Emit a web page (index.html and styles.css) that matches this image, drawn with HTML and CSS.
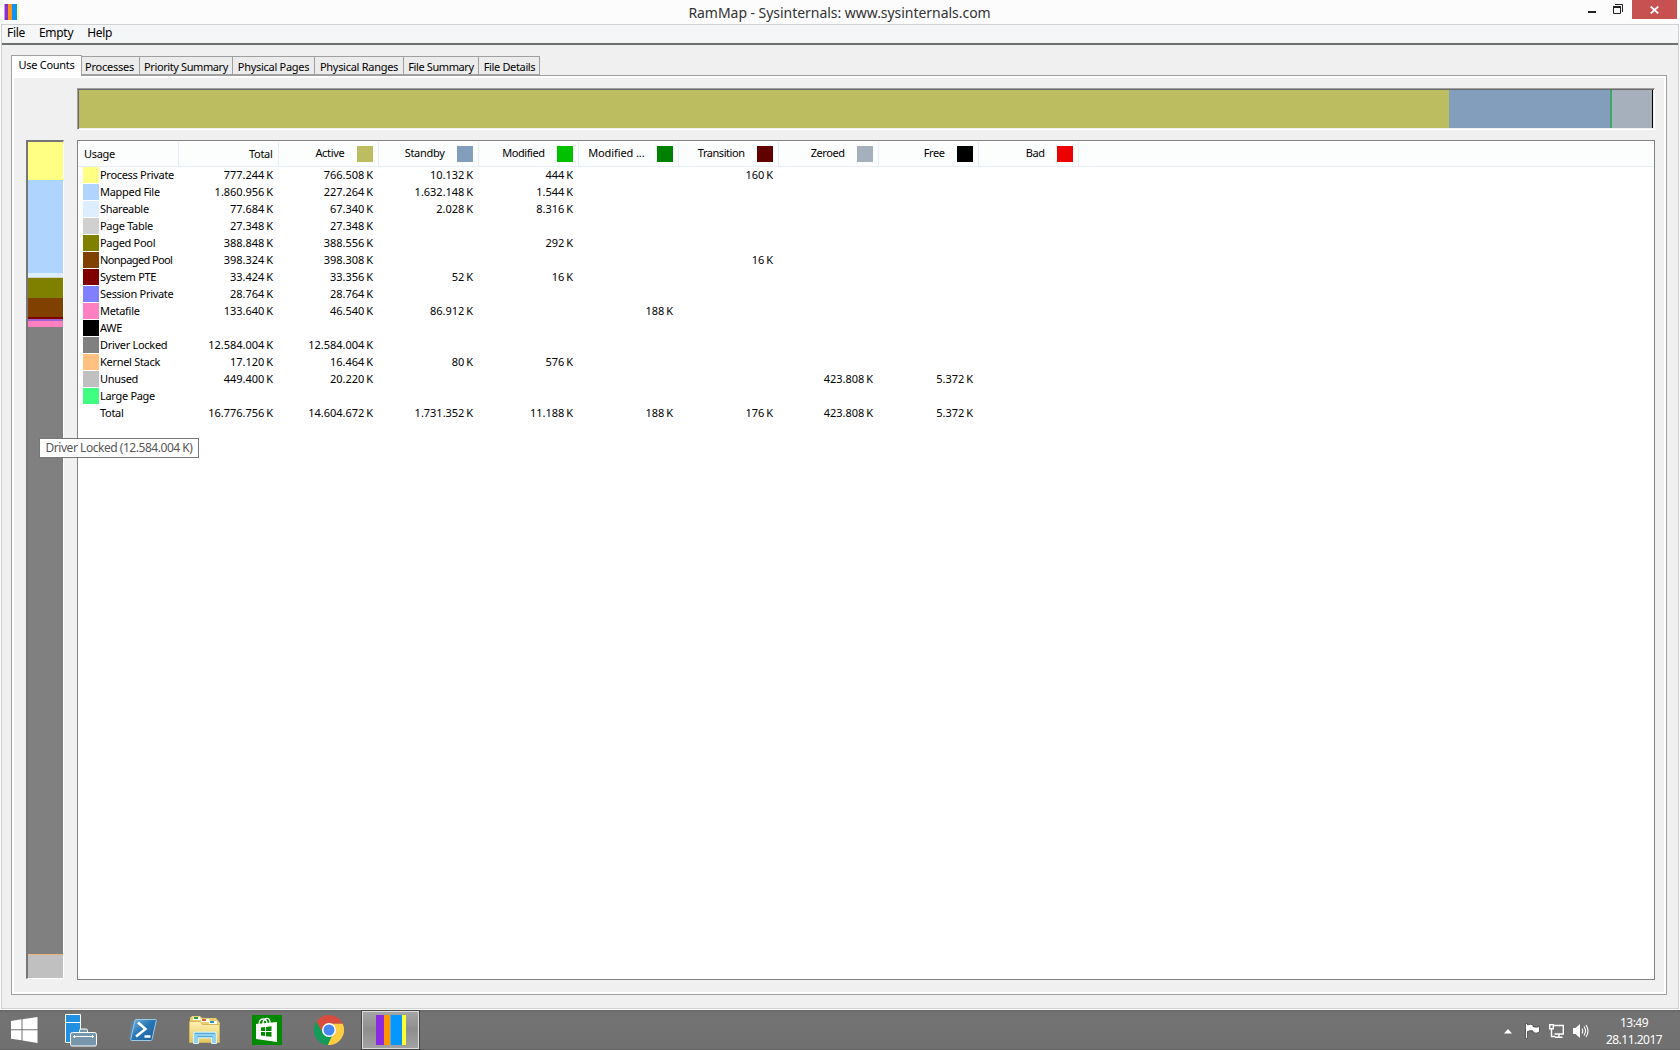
FILE: index.html
```html
<!DOCTYPE html>
<html lang="en">
<head>
<meta charset="utf-8">
<title>RamMap - Sysinternals: www.sysinternals.com</title>
<link rel="stylesheet" href="styles.css">
</head>
<body>
<header class="titlebar">
  <svg class="app-icon" width="15" height="16" viewBox="0 0 15 16"><path fill="#c79ae6" d="M0 0h1v16H0z"/><path fill="#8433cf" d="M1 0h3v16H1z"/><path fill="#ff9318" d="M4 0h4v16H4z"/><path fill="#0c95f5" d="M8 0h5v16H8z"/><path fill="#fbf99a" d="M13 0h2v16h-2z"/></svg>
  <h1 class="title">RamMap - Sysinternals: www.sysinternals.com</h1>
  <div class="controls">
    <svg width="8" height="20" viewBox="0 0 8 20"><path fill="#222" d="M0 11h8v2H0z"/></svg>
    <svg width="10" height="20" viewBox="0 0 10 20"><path fill="none" stroke="#222" d="M2 4.500h7.500V12M.5 8v5.500h7V7"/><path fill="#222" d="M0 6h8v2H0z"/></svg>
    <span class="close"><svg width="9" height="8" viewBox="0 0 9 8"><path stroke="#fff" stroke-width="1.700" d="M.7.500l7.600 7M8.300.500L.7 7.500"/></svg></span>
  </div>
</header>
<main class="window">
  <nav class="menu"><span>File</span><span>Empty</span><span>Help</span></nav>
  <div class="client">
    <div class="tabs">
      <span class="tab selected">Use Counts</span><span class="tab t2">Processes</span><span class="tab t3">Priority Summary</span><span class="tab t4">Physical Pages</span><span class="tab t5">Physical Ranges</span><span class="tab t6">File Summary</span><span class="tab t7">File Details</span>
    </div>
    <section class="page">
      <div class="usage-bar">
        <i style="height:38px;background:#ffff84"></i><i style="height:93px;background:#afd5ff"></i><i style="height:4px;background:#dceeff"></i><i style="height:1px;background:#d0d0d0"></i><i style="height:20px;background:#808000"></i><i style="height:19px;background:#804000"></i><i style="height:2px;background:#800000"></i><i style="height:2px;background:#a064d0"></i><i style="height:6px;background:#ff80c0"></i><i style="height:627px;background:#808080"></i><i style="height:1px;background:#eeb47e"></i><i style="height:23px;background:#c0c0c0"></i>
      </div>
      <div class="content">
        <div class="list-bar">
          <i style="width:1370px;background:#bcbc60"></i><i style="width:161px;background:#839dbc"></i><i style="width:2px;background:#3fa763"></i><i style="width:40px;background:#a5b0bc"></i><i style="width:1px;background:#000"></i>
        </div>
        <div class="list">
          <table>
            <thead><tr><th>Usage</th><th>Total</th><th>Active<b style="background:#bcbc60"></b></th><th>Standby<b style="background:#839dbc"></b></th><th>Modified<b style="background:#00c000"></b></th><th class="wide">Modified ...<b style="background:#008000"></b></th><th>Transition<b style="background:#600000"></b></th><th>Zeroed<b style="background:#a5b0bc"></b></th><th>Free<b style="background:#000"></b></th><th>Bad<b style="background:#ec0000"></b></th><th></th></tr></thead>
            <tbody>
              <tr><td><b style="background:#ffff84"></b>Process Private</td><td>777.244 K</td><td>766.508 K</td><td>10.132 K</td><td>444 K</td><td></td><td>160 K</td></tr>
              <tr><td><b style="background:#afd5ff"></b>Mapped File</td><td>1.860.956 K</td><td>227.264 K</td><td>1.632.148 K</td><td>1.544 K</td></tr>
              <tr><td><b style="background:#dceeff"></b>Shareable</td><td>77.684 K</td><td>67.340 K</td><td>2.028 K</td><td>8.316 K</td></tr>
              <tr><td><b style="background:#d0d0d0"></b>Page Table</td><td>27.348 K</td><td>27.348 K</td></tr>
              <tr><td><b style="background:#808000"></b>Paged Pool</td><td>388.848 K</td><td>388.556 K</td><td></td><td>292 K</td></tr>
              <tr><td><b style="background:#804000"></b><span class="tight">Nonpaged Pool</span></td><td>398.324 K</td><td>398.308 K</td><td></td><td></td><td></td><td>16 K</td></tr>
              <tr><td><b style="background:#800000"></b>System PTE</td><td>33.424 K</td><td>33.356 K</td><td>52 K</td><td>16 K</td></tr>
              <tr><td><b style="background:#8080ff"></b>Session Private</td><td>28.764 K</td><td>28.764 K</td></tr>
              <tr><td><b style="background:#ff80c0"></b>Metafile</td><td>133.640 K</td><td>46.540 K</td><td>86.912 K</td><td></td><td>188 K</td></tr>
              <tr><td><b style="background:#000"></b>AWE</td></tr>
              <tr><td><b style="background:#808080"></b>Driver Locked</td><td>12.584.004 K</td><td>12.584.004 K</td></tr>
              <tr><td><b style="background:#ffc080"></b>Kernel Stack</td><td>17.120 K</td><td>16.464 K</td><td>80 K</td><td>576 K</td></tr>
              <tr><td><b style="background:#c0c0c0"></b>Unused</td><td>449.400 K</td><td>20.220 K</td><td></td><td></td><td></td><td></td><td>423.808 K</td><td>5.372 K</td></tr>
              <tr><td><b style="background:#40ff80"></b>Large Page</td></tr>
              <tr><td><b></b>Total</td><td>16.776.756 K</td><td>14.604.672 K</td><td>1.731.352 K</td><td>11.188 K</td><td>188 K</td><td>176 K</td><td>423.808 K</td><td>5.372 K</td></tr>
            </tbody>
          </table>
        </div>
      </div>
    </section>
  </div>
</main>
<div class="tooltip">Driver Locked (12.584.004 K)</div>
<footer class="taskbar">
  <div class="apps">
    <span class="app"><svg width="28" height="28" viewBox="0 0 28 28"><path fill="#fff" d="M1 5l10.500-1.700v10H1zM12.500 3.200L27.500 1v12.300h-15zM1 14.300h10.500v10L1 22.700zM12.500 14.300h15V27l-15-2.400z"/></svg></span>
    <span class="app"><svg width="34" height="34" viewBox="0 0 34 34"><path fill="#2290e0" stroke="#fff" d="M1.500 1.500h15v28h-15zM1.500 9.500h15"/><path fill="#7795ab" stroke="#fff" d="M15.500 19.500v-2q0-1.500 1.500-1.500h5q1.500 0 1.500 1.500v2M8.500 19.500h22q2 0 2 2v10q0 1.500-1.500 1.500H8q-1.500 0-1.500-1.500v-10q0-2 2-2z"/><path fill="none" stroke="#fff" d="M9 23.500h21M10.500 22v3M28.500 22v3"/></svg></span>
    <span class="app"><svg width="30" height="26" viewBox="0 0 30 26"><defs><linearGradient id="ps" x2="1" y2="1"><stop stop-color="#7fb9de"/><stop offset=".45" stop-color="#2878b6"/><stop offset="1" stop-color="#1b5a9d"/></linearGradient></defs><path fill="#5f8097" d="M3 4h4L4 22H1z"/><path fill="url(#ps)" stroke="#9bcbe6" d="M8 2.500h19.500q1 0 .8 1L24 22.500q-.2 1-1.200 1H3.500q-1 0-.8-1L6.900 3.500q.2-1 1.100-1z"/><path fill="none" stroke="#fff" stroke-width="2.500" d="M10 5.500l7.500 6.500L8 19.500M16.500 19.500h6"/></svg></span>
    <span class="app"><svg width="32" height="32" viewBox="0 0 32 32"><defs><linearGradient id="fo" x2="0" y2="1"><stop stop-color="#fdf2b2"/><stop offset="1" stop-color="#e7c65b"/></linearGradient></defs><path fill="#e9cf70" d="M1 4l2-2h8l2 2h14l4 5v19H1z"/><path fill="#fff" d="M4 3h7l1 3H4zM12 5h8l1 3h-9zM20 7h8v3h-8z"/><path fill="#21a038" d="M5 3h4v2H5z"/><path fill="#d95a31" d="M13 5h4v2h-4z"/><path fill="#318fc8" d="M21 7h4v2h-4z"/><path fill="url(#fo)" stroke="#d5b559" d="M.5 7.500h11l2 3h17v18H.5z"/><path fill="#93d2ef" stroke="#d5f2fb" d="M4.500 29.500V20q0-2 2-2h19q2 0 2 2v9.500h-5V24H9.500v5.500z"/><path fill="none" stroke="#55a8d4" d="M6 19.500h20M8.500 22.500h15"/></svg></span>
    <span class="app"><svg width="30" height="30" viewBox="0 0 30 30"><path fill="#008a00" d="M0 0h30v30H0z"/><path fill="#fff" d="M4 9l21-2v20L4 24z"/><path fill="none" stroke="#fff" stroke-width="1.300" d="M7 10q0-6 4-6t4 5M11 9q0-5 3.500-5.500T18 8"/><path fill="#008a00" d="M9 12.500l4-.5v4H9zM14 12l5.500-.7V16H14zM9 17h4v4l-4-.5zM14 17h5.500v4.800L14 21.200z"/></svg></span>
    <span class="app"><svg width="30" height="30" viewBox="0 0 30 30"><path fill="#139b59" d="M15 15L2 7.500A15 15 0 0 0 14 30z"/><path fill="#ffcd41" d="M15 15l-1.200 15A15 15 0 0 0 28.500 8.500H15z"/><path fill="#d94b3d" d="M15 15L8.500 17.500 2.500 6.700A15 15 0 0 1 28.500 8.500H15z"/><path fill="#139b59" d="M2.500 6.700l6.300 11.500L15 21.800 18 21l-4.200 9A15 15 0 0 1 2.500 6.700z"/><circle cx="15" cy="15" r="7" fill="#fff"/><circle cx="15" cy="15" r="5.500" fill="#4688f1"/></svg></span>
    <span class="app active"><svg width="30" height="30" viewBox="0 0 30 30"><path fill="#8a2be2" d="M0 0h8v30H0z"/><path fill="#ff9800" d="M8 0h6v30H8z"/><path fill="#6da6c6" d="M14 0h1v30h-1z"/><path fill="#0498ff" d="M15 0h11v30H15z"/><path fill="#ffff35" d="M26 0h4v30h-4z"/></svg></span>
  </div>
  <div class="tray">
    <svg width="8" height="5" viewBox="0 0 8 5"><path fill="#fff" d="M4 0l4 4.500H0z"/></svg>
    <svg width="17" height="18" viewBox="0 0 17 18"><path fill="#fff" stroke="#444" stroke-width=".8" d="M1.500 1.500h2V3Q7 1.500 9 3v1.500q3 1.500 6.500 0V10q-3 2-6.500.5V9Q7 8 3.500 9.500v7h-2z"/></svg>
    <svg width="17" height="16" viewBox="0 0 17 16"><path fill="none" stroke="#fff" stroke-width="1.400" d="M6 2.500h9.300V11H6.500M11 11v3M7 14.300h7.500M1.700 1.700h3.600v4H1.700zM3.500 6v7.500H7"/></svg>
    <svg width="17" height="16" viewBox="0 0 17 16"><path fill="#fff" d="M1 5h2.500L8 1v14l-4.500-4H1z"/><path fill="none" stroke="#fff" stroke-width="1.100" d="M10 5.500q1.500 2.500 0 5M12 3.500q3 4.500 0 9M14 2q4 6 0 12"/></svg>
    <div class="clock"><span>13:49</span><span>28.11.2017</span></div>
  </div>
</footer>
</body>
</html>
```
FILE: styles.css
```css
* { box-sizing: border-box; }
body {
  margin: 0;
  width: 1680px;
  height: 1050px;
  overflow: hidden;
  display: flex;
  flex-direction: column;
  position: relative;
  background: #fcfcfc;
  color: #000;
  font-family: "Noto Sans", "Liberation Sans", sans-serif;
}
svg { display: block; flex: none; }

.titlebar {
  height: 24px;
  display: grid;
  grid-template-columns: 340px 1fr 340px;
  padding: 0 4px 0 3px;
}
.app-icon { margin: 4px 0 0 1px; }
.title {
  margin: 0;
  text-align: center;
  font: 14px/25px "Noto Sans", sans-serif;
  letter-spacing: -0.04px;
  color: #333;
}
.controls { display: flex; justify-content: flex-end; margin-right: -1px; }
.controls > svg:first-child { margin-right: 17px; }
.controls > svg:nth-child(2) { margin-right: 9px; }
.close {
  width: 45px;
  height: 19px;
  background: #c75050;
  display: flex;
  align-items: center;
  justify-content: center;
}

.window {
  height: 985px;
  margin: 0 1px;
  border: 1px solid #d0d2d0;
  background: #f0f0f0;
  display: flex;
  flex-direction: column;
}
.menu {
  height: 20px;
  flex: none;
  display: flex;
  gap: 14px;
  padding-left: 5px;
  background: #f5f6f7;
  border-bottom: 2px solid #6d6f6d;
  font-size: 12px;
  line-height: 16px;
  letter-spacing: -0.3px;
}

.client { flex: 1; padding: 10px 11px 13px 9px; display: flex; flex-direction: column; }
.tabs { height: 20px; flex: none; display: flex; align-items: flex-end; }
.tab {
  height: 19px;
  border: 1px solid #a0a0a0;
  border-left: 0;
  background: #ececec;
  text-align: center;
  white-space: nowrap;
  font-size: 11px;
  line-height: 19px;
  letter-spacing: -0.28px;
}
.selected {
  width: 71px;
  height: 21px;
  margin-bottom: -1px;
  border-left: 1px solid #a0a0a0;
  border-bottom: 0;
  background: #fff;
  line-height: 18px;
  z-index: 1;
}
.t2 { width: 58px; padding-right: 2px; letter-spacing: -0.25px; }
.t3 { width: 93px; letter-spacing: -0.4px; }
.t4 { width: 82px; }
.t5 { width: 89px; }
.t6 { width: 75px; letter-spacing: -0.4px; }
.t7 { width: 61px; letter-spacing: -0.35px; padding-left: 1px; }
.page {
  flex: 1;
  border: 1px solid #a0a0a0;
  box-shadow: inset 0 0 0 2px #fff;
  padding: 12px 11px 14px 14px;
  display: flex;
  gap: 13px;
}
.usage-bar {
  width: 39px;
  height: 839px;
  margin-top: 52px;
  border: 1px solid;
  border-color: #777 #fff #fff #777;
  border-top-width: 2px;
  border-left-width: 2px;
}
.usage-bar i { display: block; }
.content { flex: 1; display: flex; flex-direction: column; gap: 10px; }
.list-bar {
  height: 42px;
  display: flex;
  padding: 1px;
  border: 1px solid;
  border-color: #a0a0a0 #fff #fff #a0a0a0;
  box-shadow: inset 1px 1px #696969;
}
.list { flex: 1; border: 1px solid #828287; background: #fff; padding-top: 1px; }

table {
  border-collapse: collapse;
  table-layout: fixed;
  width: 100%;
  font-size: 11px;
  letter-spacing: -0.3px;
  line-height: 17px;
}
th, td { width: 100px; padding: 0 5px 0 0; text-align: right; white-space: nowrap; }
th {
  height: 24px;
  font-weight: normal;
  background: #fcfdfd;
  border-bottom: 1px solid #e8eef8;
  border-right: 1px solid #e8eef8;
  line-height: 16px;
}
th:nth-child(n + 5) { letter-spacing: -0.45px; }
.list .wide { letter-spacing: -0.1px; }
th:first-child { padding-left: 6px; text-align: left; }
th:last-child { width: auto; border-right: 0; }
th b { display: inline-block; width: 16px; height: 16px; margin: 0 0 0 12px; vertical-align: middle; }
td { height: 17px; line-height: 15px; padding-bottom: 2px; letter-spacing: -0.02px; word-spacing: -1px; }
td:first-child {
  display: flex;
  width: auto;
  padding: 0 0 0 5px;
  text-align: left;
  letter-spacing: -0.3px;
  word-spacing: 0;
}
td b { width: 16px; height: 16px; margin-right: 1px; }
.tight { letter-spacing: -0.6px; }

.tooltip {
  position: absolute;
  left: 39px;
  top: 438px;
  width: 160px;
  height: 20px;
  border: 1px solid #767676;
  background: #fff;
  color: #575757;
  text-align: center;
  white-space: nowrap;
  font-size: 12px;
  line-height: 18px;
  letter-spacing: -0.46px;
}

.taskbar {
  height: 40px;
  margin-top: 1px;
  background: linear-gradient(#676767, #737373 3px, #707070 38px, #626262);
  display: flex;
  justify-content: space-between;
}
.apps { display: flex; }
.app { width: 62px; height: 40px; display: flex; align-items: center; justify-content: center; }
.app:first-child { width: 48px; }
.app:nth-child(2) { width: 65px; }
.app:nth-child(3) { width: 60px; margin-right: 1px; }
.apps .active {
  width: 59px;
  margin-left: 1px;
  border: 1px solid #444;
  box-shadow: inset 0 0 0 1px #ddd;
  background: linear-gradient(#a6a6a6, #8e8e8e 48%, #a3a3a3);
}
.tray { display: flex; align-items: center; gap: 7px; padding-right: 17px; }
.tray > svg { margin-top: 2px; }
.tray > svg:first-child { margin-right: 5px; }
.clock {
  width: 58px;
  margin-left: 9px;
  display: flex;
  flex-direction: column;
  align-items: center;
  color: #fff;
  font-size: 12px;
  line-height: 17px;
  padding-top: 2px;
  letter-spacing: -0.52px;
}
```
